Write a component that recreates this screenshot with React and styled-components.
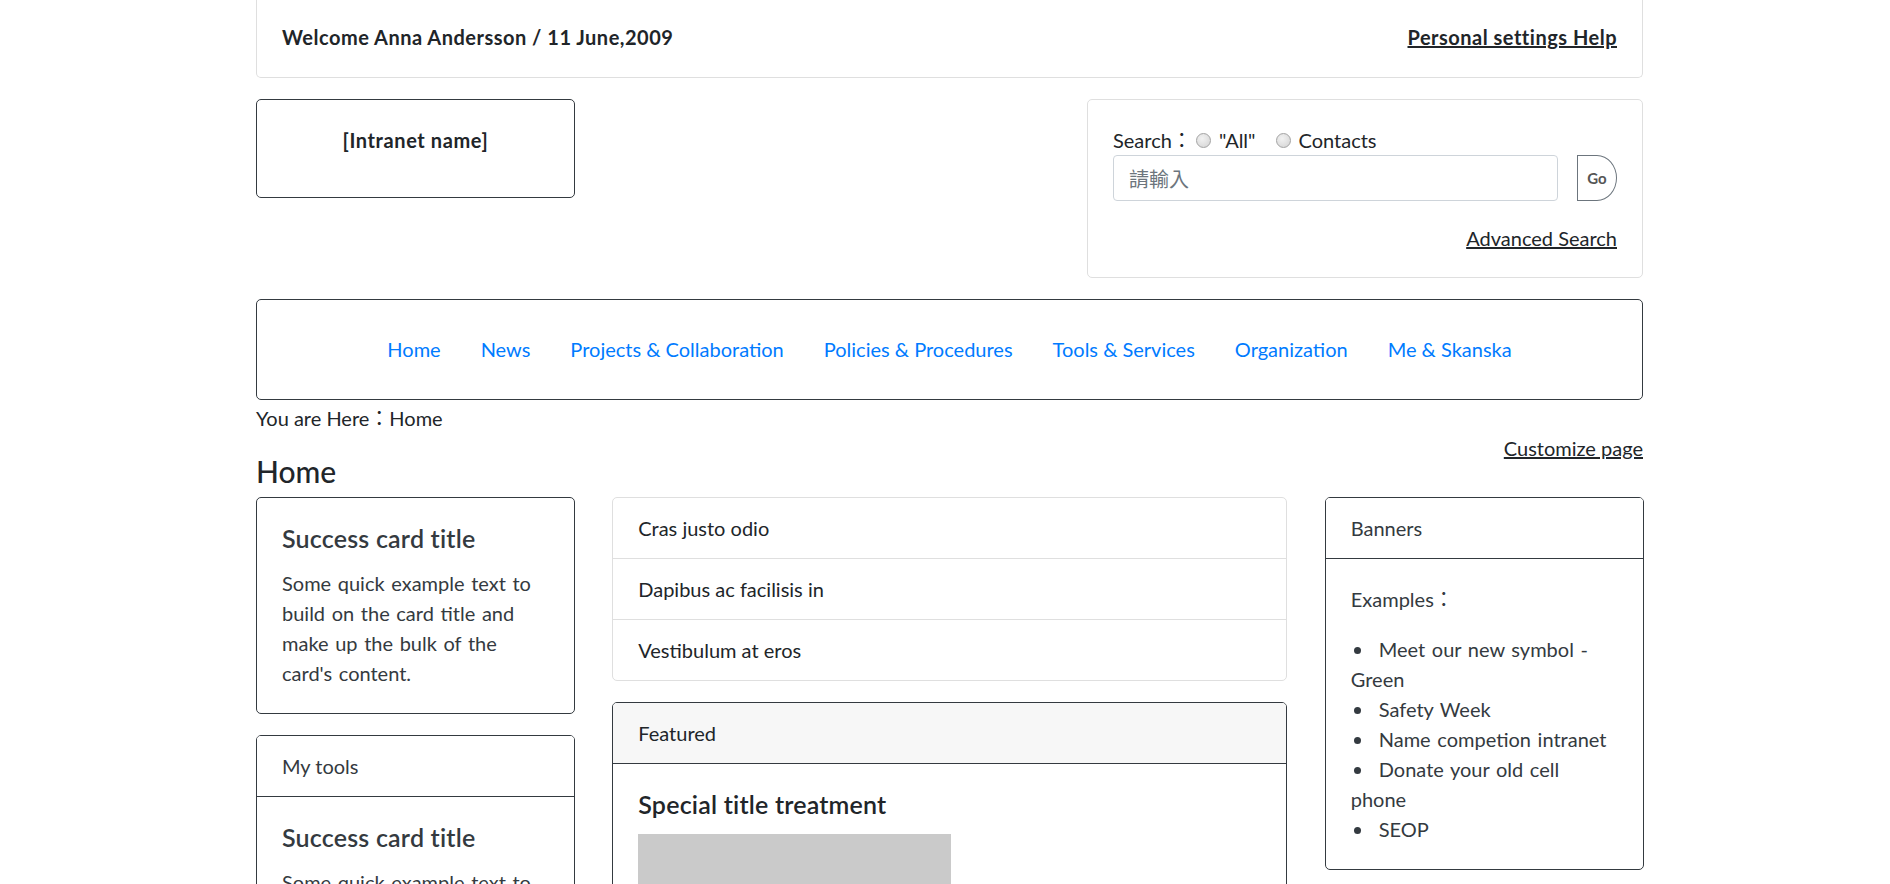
import React from 'react';
import styled, { createGlobalStyle } from 'styled-components';

const GlobalStyle = createGlobalStyle`
  * {
    box-sizing: border-box;
  }

  body {
    margin: 0;
    background: #fff;
    color: #212529;
    font-family: Lato, "Noto Sans CJK TC", sans-serif;
    font-size: 20px;
    line-height: 30px;
  }
`;

const Page = styled.div`
  width: 1387px;
  margin-left: 256px;
`;

const TopBar = styled.header`
  display: flex;
  justify-content: space-between;
  padding: 22px 25px 25px;
  border: 1px solid #dfdfdf;
  border-top: 0;
  border-radius: 0 0 5px 5px;
  font-weight: 700;
  letter-spacing: 0.5px;
`;

const PlainLink = styled.a`
  color: #212529;
  text-decoration: underline;
  cursor: pointer;
`;

const Masthead = styled.div`
  display: flex;
  justify-content: space-between;
  align-items: flex-start;
  margin-top: 21px;
`;

const Card = styled.div`
  width: ${p => p.$width || 'auto'};
  border: 1px solid ${p => (p.$light ? '#dfdfdf' : '#343a40')};
  border-radius: 5px;
  color: ${p => p.$tone || 'inherit'};
  overflow: hidden;
`;

const CardHeader = styled.div`
  padding: 15px 25px;
  border-bottom: 1px solid #343a40;
  background: ${p => (p.$muted ? '#f7f7f7' : '#fff')};
`;

const CardBody = styled.div`
  padding: ${p => p.$padding || '25px'};
  text-align: ${p => p.$align || 'left'};
  font-weight: ${p => (p.$bold ? 700 : 400)};
  letter-spacing: ${p => (p.$bold ? '0.6px' : 'normal')};
  word-spacing: ${p => (p.$wide ? '1.5px' : 'normal')};
`;

const CardTitle = styled.h5`
  margin: 0 0 15px;
  font-size: 25px;
  line-height: 30px;
  font-weight: 600;
  letter-spacing: 0.2px;
  word-spacing: normal;
`;

const CardText = styled.p`
  margin: 0 0 ${p => p.$gap || 0}px;
`;

const SearchLine = styled.div`
  display: flex;
  align-items: center;
`;

const Radio = styled.input.attrs({ type: 'radio' })`
  appearance: none;
  width: 15px;
  height: 15px;
  margin: 0 ${p => p.$after}px 0 ${p => p.$before}px;
  border: 1px solid #a3a3a3;
  border-radius: 50%;
  background: radial-gradient(circle at 40% 35%, #f2f2f2 0%, #dcdcdc 70%, #cfcfcf 100%);
`;

const InputRow = styled.div`
  display: flex;
  align-items: center;
  gap: 19px;
`;

const SearchInput = styled.input`
  width: 445px;
  height: 46px;
  padding: 0 15px;
  border: 1px solid #ced4da;
  border-radius: 4px;
  color: #495057;
  font-family: "Noto Sans CJK TC", Lato, sans-serif;
  font-size: 20px;

  &::placeholder {
    color: #6c757d;
  }
`;

const GoButton = styled.button`
  width: 40px;
  height: 46px;
  padding: 0;
  border: 1px solid #6c757d;
  border-radius: 0 50% 50% 0;
  background: #fff;
  color: #555;
  font-family: Lato, sans-serif;
  font-size: 15px;
  font-weight: 700;
`;

const AdvancedRow = styled.div`
  margin-top: 22px;
  text-align: right;
`;

const Nav = styled.nav`
  display: flex;
  justify-content: center;
  margin-top: 21px;
  padding: 34px 0 35px;
  border: 1px solid #343a40;
  border-radius: 5px;
`;

const NavLink = styled.a`
  padding: 0 20px;
  color: #007bff;
  text-decoration: none;
  cursor: pointer;
`;

const Breadcrumb = styled.div`
  margin-top: 3px;
`;

const TitleRow = styled.div`
  display: flex;
  justify-content: space-between;
  align-items: flex-start;
  margin-bottom: 8px;
`;

const PageTitle = styled.h4`
  margin: 20px 0 0;
  font-size: 30px;
  line-height: 36px;
  font-weight: 500;
`;

const Columns = styled.div`
  display: grid;
  grid-template-columns: 318.75px 675px 318.75px;
  column-gap: 37.5px;
  align-items: start;
`;

const Column = styled.div`
  display: flex;
  flex-direction: column;
  gap: 21px;
`;

const ListGroup = styled.ul`
  margin: 0;
  padding: 0;
  list-style: none;
  border: 1px solid #dfdfdf;
  border-radius: 5px;
`;

const ListItem = styled.li`
  padding: 15px 25px;

  & + & {
    border-top: 1px solid #dfdfdf;
  }
`;

const Placeholder = styled.div`
  width: 313px;
  height: 220px;
  background: #cacaca;
`;

const BulletList = styled.ul`
  margin: 0;
  padding: 0;
  list-style: none;
`;

const Bullet = styled.li`
  &::before {
    content: '';
    display: inline-block;
    width: 7px;
    height: 7px;
    margin: 0 18px 0 3px;
    border-radius: 50%;
    background: #343a40;
    vertical-align: 3px;
  }
`;

const navItems = [
  'Home',
  'News',
  'Projects & Collaboration',
  'Policies & Procedures',
  'Tools & Services',
  'Organization',
  'Me & Skanska',
];

const listItems = ['Cras justo odio', 'Dapibus ac facilisis in', 'Vestibulum at eros'];

const banners = [
  'Meet our new symbol - Green',
  'Safety Week',
  'Name competion intranet',
  'Donate your old cell phone',
  'SEOP',
];

const sampleText =
  "Some quick example text to build on the card title and make up the bulk of the card's content.";

export default function App() {
  return (
    <>
      <GlobalStyle />
      <Page>
        <TopBar>
          <span>Welcome Anna Andersson / 11 June,2009</span>
          <PlainLink>Personal settings Help</PlainLink>
        </TopBar>

        <Masthead>
          <Card $width="319px">
            <CardBody $padding="25px 25px 42px" $align="center" $bold>
              [Intranet name]
            </CardBody>
          </Card>
          <Card $width="556px" $light>
            <CardBody $padding="25px 25px 24px">
              <SearchLine>
                Search：
                <Radio name="scope" $before={4} $after={8} />
                "All"
                <Radio name="scope" $before={20} $after={8} />
                Contacts
              </SearchLine>
              <InputRow>
                <SearchInput placeholder="請輸入" />
                <GoButton>Go</GoButton>
              </InputRow>
              <AdvancedRow>
                <PlainLink>Advanced Search</PlainLink>
              </AdvancedRow>
            </CardBody>
          </Card>
        </Masthead>

        <Nav>
          {navItems.map(item => (
            <NavLink key={item}>{item}</NavLink>
          ))}
        </Nav>

        <Breadcrumb>You are Here：Home</Breadcrumb>

        <TitleRow>
          <PageTitle>Home</PageTitle>
          <PlainLink>Customize page</PlainLink>
        </TitleRow>

        <Columns>
          <Column>
            <Card $tone="#343a40">
              <CardBody $wide>
                <CardTitle>Success card title</CardTitle>
                <CardText>{sampleText}</CardText>
              </CardBody>
            </Card>
            <Card $tone="#343a40">
              <CardHeader>My tools</CardHeader>
              <CardBody $wide>
                <CardTitle>Success card title</CardTitle>
                <CardText>{sampleText}</CardText>
              </CardBody>
            </Card>
          </Column>

          <Column>
            <ListGroup>
              {listItems.map(item => (
                <ListItem key={item}>{item}</ListItem>
              ))}
            </ListGroup>
            <Card>
              <CardHeader $muted>Featured</CardHeader>
              <CardBody>
                <CardTitle>Special title treatment</CardTitle>
                <Placeholder />
              </CardBody>
            </Card>
          </Column>

          <Column>
            <Card $tone="#343a40">
              <CardHeader>Banners</CardHeader>
              <CardBody $wide>
                <CardText $gap={20}>Examples：</CardText>
                <BulletList>
                  {banners.map(item => (
                    <Bullet key={item}>{item}</Bullet>
                  ))}
                </BulletList>
              </CardBody>
            </Card>
          </Column>
        </Columns>
      </Page>
    </>
  );
}
